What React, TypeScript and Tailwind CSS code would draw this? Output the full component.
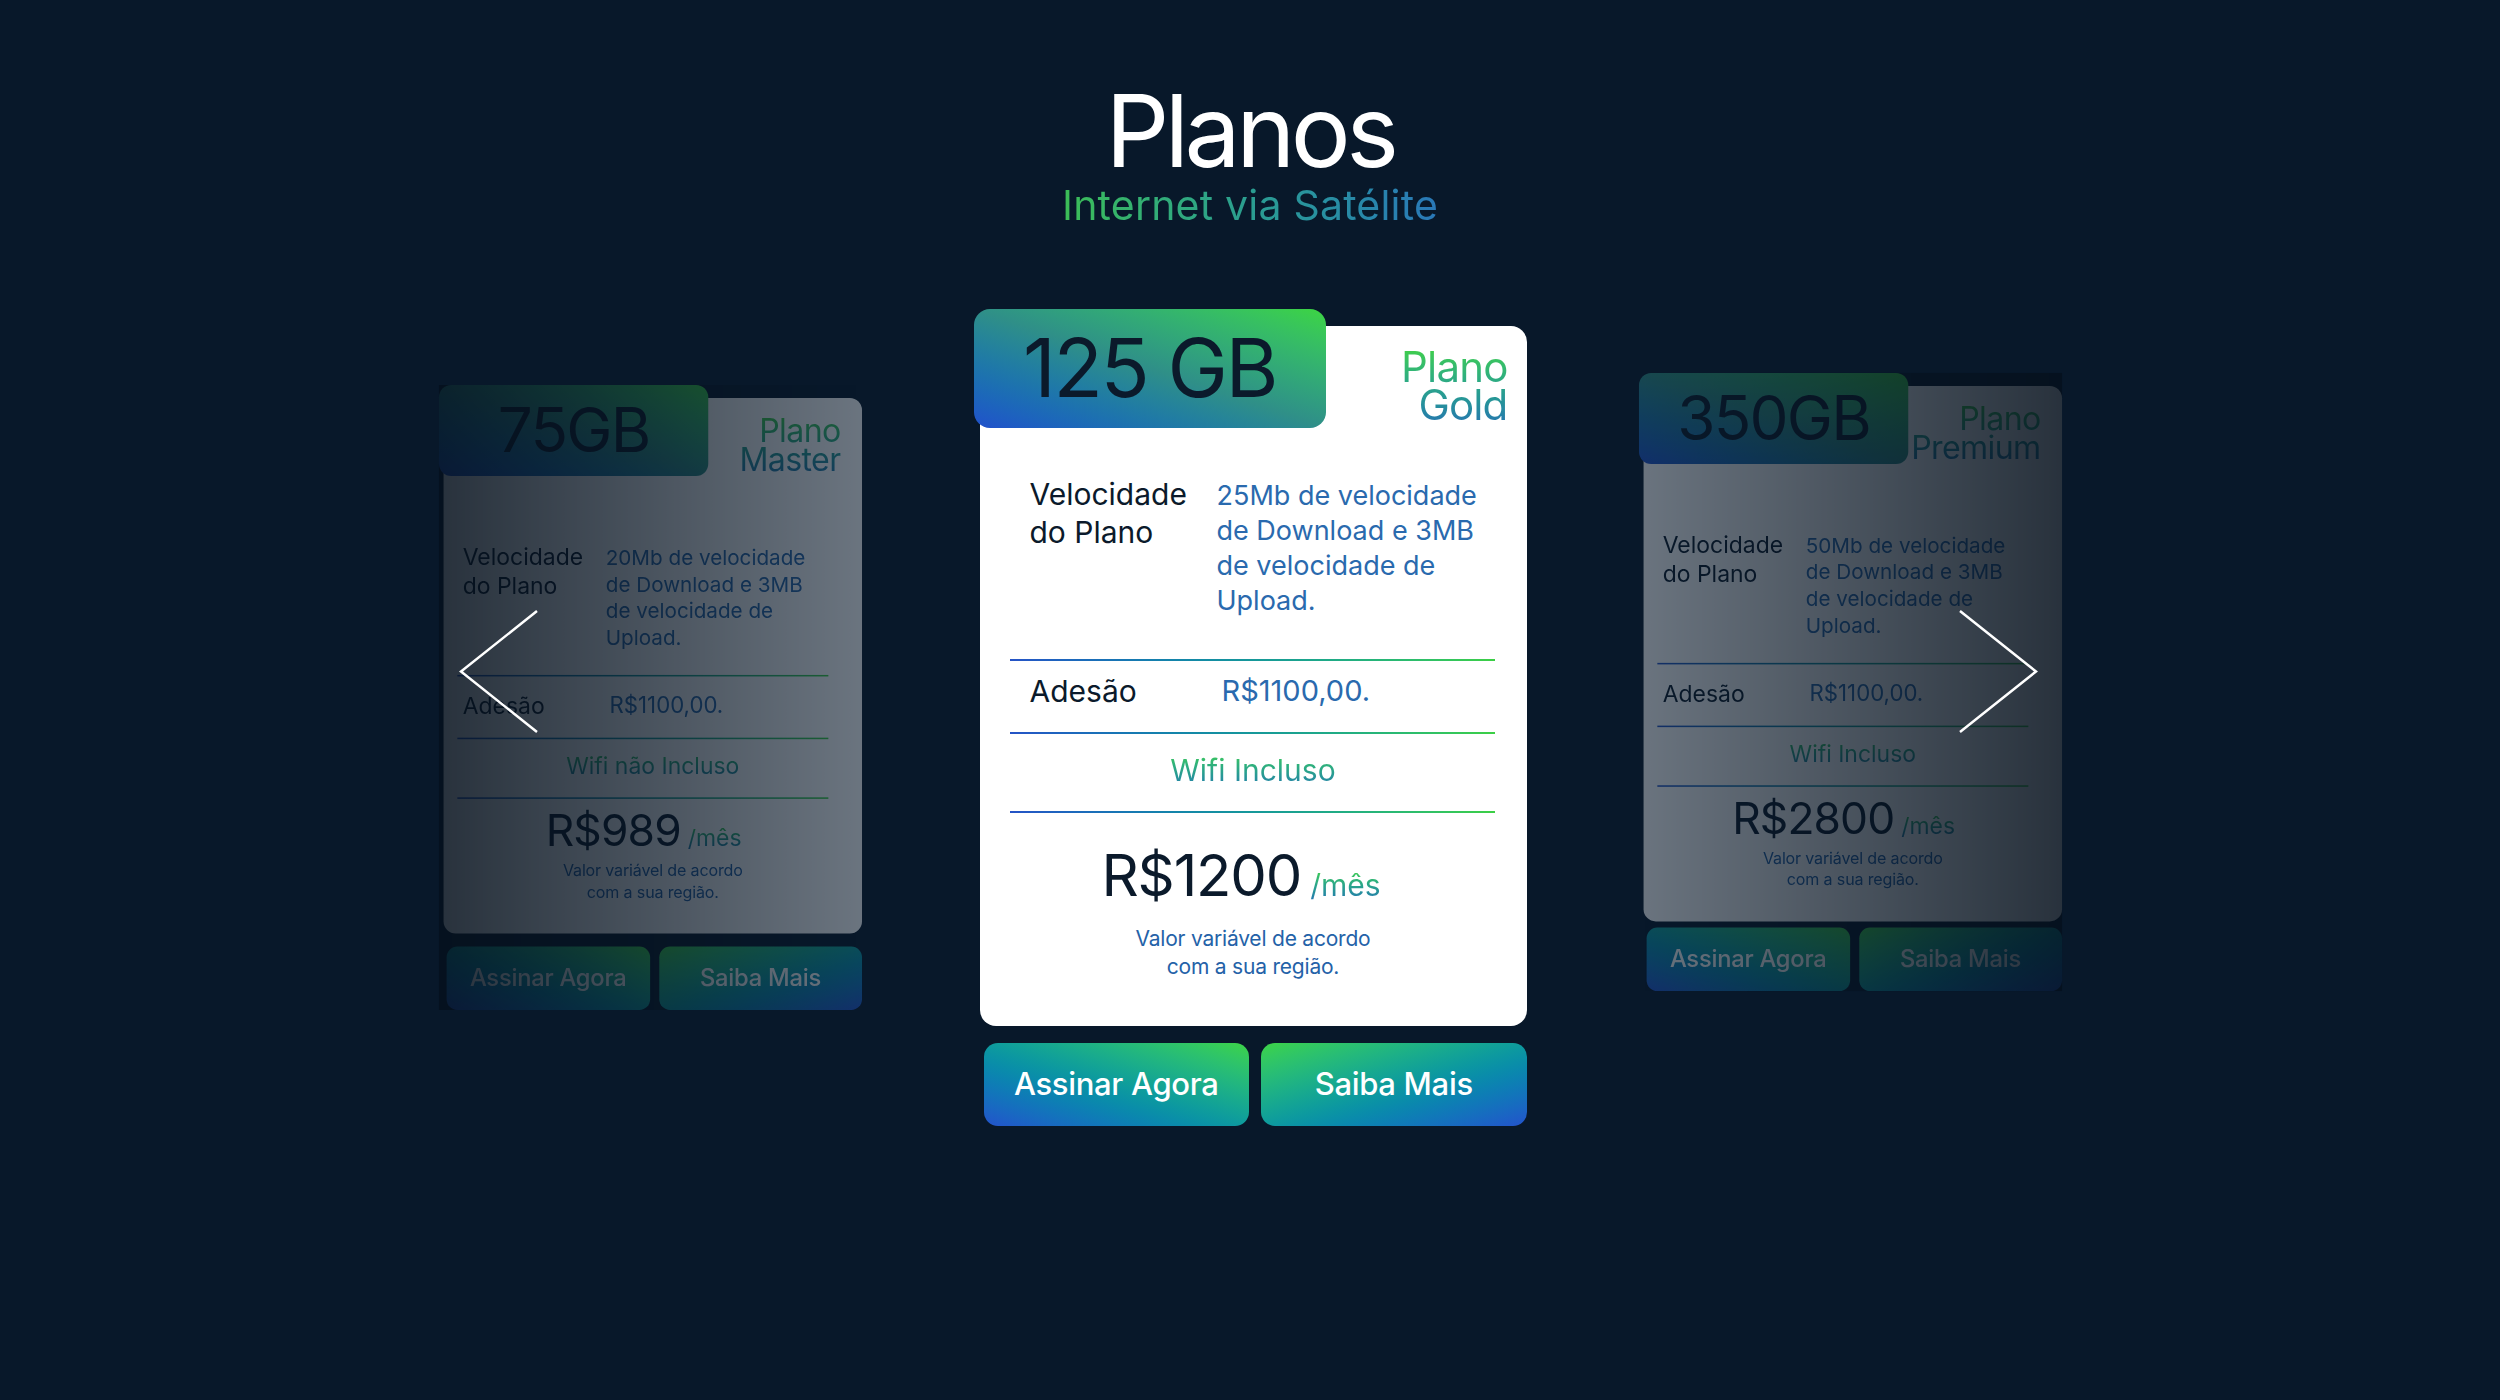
import React from "react";

type Plan = {
  gb: string;
  name: [string, string];
  speed: string[];
  fee: string;
  wifi: string;
  price: string;
};

const plans: Plan[] = [
  {
    gb: "75GB",
    name: ["Plano", "Master"],
    speed: ["20Mb de velocidade", "de Download e 3MB", "de velocidade de", "Upload."],
    fee: "R$1100,00.",
    wifi: "Wifi não Incluso",
    price: "R$989",
  },
  {
    gb: "125 GB",
    name: ["Plano", "Gold"],
    speed: ["25Mb de velocidade", "de Download e 3MB", "de velocidade de", "Upload."],
    fee: "R$1100,00.",
    wifi: "Wifi Incluso",
    price: "R$1200",
  },
  {
    gb: "350GB",
    name: ["Plano", "Premium"],
    speed: ["50Mb de velocidade", "de Download e 3MB", "de velocidade de", "Upload."],
    fee: "R$1100,00.",
    wifi: "Wifi Incluso",
    price: "R$2800",
  },
];

const divider = "h-[2px] w-[485px] bg-linear-to-r from-[#2553c6] to-[#3ccf44]";
const greenText = "bg-linear-to-b from-[#41cf45] to-[#2777ae] bg-clip-text text-transparent";

function PlanCard({ plan, side, tight }: { plan: Plan; side?: boolean; tight?: boolean }) {
  return (
    <div className="w-[553px] pt-[17px]">
      <div className="relative ml-[6px] h-[700px] w-[547px] rounded-[16px] bg-white">
        <div className="absolute -left-[6px] -top-[17px] flex h-[119px] w-[352px] items-center justify-center rounded-[16px] bg-linear-to-tr from-[#2250cc] via-[#2f8f88] to-[#3dd540]">
          <span className="text-[81px] leading-none tracking-[-0.03em] text-[#0b1a2b]">{plan.gb}</span>
        </div>

        <div className={`flex justify-end ${side ? "pr-[28px] pt-[24px]" : "pr-[19px] pt-[22px]"}`}>
          <div className={`text-right text-[42px] leading-[38px] tracking-[-0.02em] ${greenText}`}>
            <div>{plan.name[0]}</div>
            <div>{plan.name[1]}</div>
          </div>
        </div>

        <div className={`flex ${side ? "mt-[88px] pl-[25px]" : "mt-[51px] pl-[50px]"}`}>
          <div className="w-[187px] text-[30px] leading-[38px] text-[#0b1a2b]">
            Velocidade
            <br />
            do Plano
          </div>
          <div className="mt-[3px] text-[27px] leading-[35px] text-[#2a6aae]">
            {plan.speed.map((line) => (
              <div key={line} className="whitespace-nowrap">
                {line}
              </div>
            ))}
          </div>
        </div>

        <div className={`${divider} ${side ? "mt-[31px] ml-[18px]" : "mt-[41px] ml-[30px]"}`} />

        <div className={`flex text-[30px] leading-[38px] ${side ? "mt-[19px] pl-[25px]" : "mt-[11px] pl-[50px]"}`}>
          <div className="w-[192px] text-[#0b1a2b]">Adesão</div>
          <div className="text-[29px] text-[#2a6aae]">{plan.fee}</div>
        </div>

        <div className={`${divider} ${side ? "mt-[23px] ml-[18px]" : "mt-[22px] ml-[30px]"}`} />

        <div className={`flex justify-center ${side ? "mt-[15px]" : "mt-[17px]"}`}>
          <span className={`text-[30px] leading-[38px] ${greenText}`}>{plan.wifi}</span>
        </div>

        <div className={`${divider} ${side ? "mt-[23px] ml-[18px]" : "mt-[22px] ml-[30px]"}`} />

        <div className={`flex items-baseline justify-center gap-[9px] pr-[24px] ${side ? "mt-[12px]" : "mt-[33px]"}`}>
          <span className="text-[58px] leading-none tracking-[-0.02em] text-[#0b1a2b]">{plan.price}</span>
          <span className={`text-[30px] leading-none ${greenText}`}>/mês</span>
        </div>

        <p
          className={`text-center text-[21px] leading-[28px] tracking-[-0.01em] text-[#2462a8] ${
            side ? "mt-[10px]" : "mt-[21px]"
          }`}
        >
          Valor variável de acordo
          <br />
          com a sua região.
        </p>
      </div>

      <div className={`ml-[10px] grid w-[543px] grid-cols-2 gap-[12px] ${tight ? "mt-[8px]" : "mt-[17px]"}`}>
        <button className="h-[83px] rounded-[14px] bg-linear-to-tr from-[#2352cc] to-[#3dd443] text-[31px] font-medium tracking-[-0.01em] text-white">
          Assinar Agora
        </button>
        <button className="h-[83px] rounded-[14px] bg-linear-to-br from-[#3dd443] to-[#2352cc] text-[31px] font-medium tracking-[-0.01em] text-white">
          Saiba Mais
        </button>
      </div>
    </div>
  );
}

function SideSlide({ plan, dir }: { plan: Plan; dir: "left" | "right" }) {
  return (
    <div className="flex w-[600px] justify-center">
      <div
        className={`relative scale-[0.765] opacity-40 ${dir === "left" ? "-translate-y-[20px]" : "-translate-y-[31px]"}`}
      >
        <PlanCard plan={plan} side tight={dir === "right"} />
        <div
          className={`pointer-events-none absolute inset-0 z-10 ${
            dir === "left"
              ? "bg-linear-to-r from-black/65 to-transparent"
              : "bg-linear-to-l from-black/65 to-transparent"
          }`}
        />
      </div>
    </div>
  );
}

function Chevron({ dir }: { dir: "left" | "right" }) {
  return (
    <svg width="80" height="123" viewBox="0 0 80 123" fill="none" stroke="white" strokeWidth="2.5">
      {dir === "left" ? <polyline points="78,1 2,61.5 78,122" /> : <polyline points="2,1 78,61.5 2,122" />}
    </svg>
  );
}

export default function App() {
  return (
    <div className="relative min-h-screen w-full overflow-hidden bg-[#08182a] font-['Inter','Liberation_Sans',sans-serif]">
      <header className="flex flex-col items-center pt-[81px]">
        <h1 className="text-[100px] leading-none tracking-[-0.045em] text-white">Planos</h1>
        <p className="mt-[4px] bg-linear-to-r from-[#3cbd55] to-[#2a78b8] bg-clip-text text-[41px] leading-none tracking-[0.005em] text-transparent">
          Internet via Satélite
        </p>
      </header>

      <section className="mt-[83px] flex items-start justify-center">
        <SideSlide plan={plans[0]} dir="left" />
        <div className="flex w-[600px] justify-center">
          <PlanCard plan={plans[1]} />
        </div>
        <SideSlide plan={plans[2]} dir="right" />
      </section>

      <button className="absolute left-[459px] top-[610px]">
        <Chevron dir="left" />
      </button>
      <button className="absolute left-[1958px] top-[610px]">
        <Chevron dir="right" />
      </button>
    </div>
  );
}
